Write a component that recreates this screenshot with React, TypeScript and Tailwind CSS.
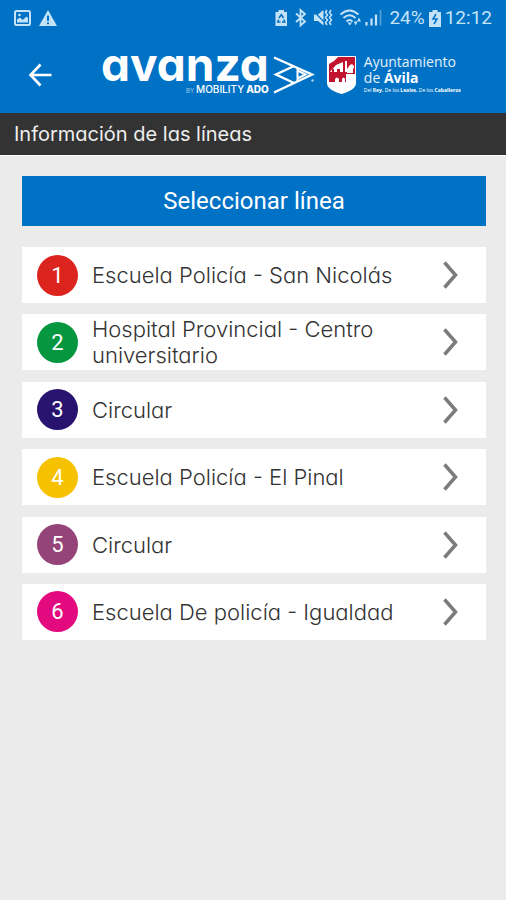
const lines = [
  { id: 1, name: "Escuela Policía - San Nicolás", color: "bg-[#dc241f]" },
  { id: 2, name: "Hospital Provincial - Centro universitario", color: "bg-[#05963f]" },
  { id: 3, name: "Circular", color: "bg-[#28146f]" },
  { id: 4, name: "Escuela Policía - El Pinal", color: "bg-[#f6c200]" },
  { id: 5, name: "Circular", color: "bg-[#954479]" },
  { id: 6, name: "Escuela De policía - Igualdad", color: "bg-[#e20a7e]" },
];

function StatusBar() {
  return (
    <div className="flex h-9 items-center justify-between px-[14px] text-[#c5e3f8]">
      <div className="flex items-center gap-2">
        <svg width="17" height="16" viewBox="0 0 17 16" aria-hidden="true">
          <rect x="1" y="1" width="15" height="14" rx="1.5" fill="none" stroke="currentColor" strokeWidth="2" />
          <path d="M3 12.5V9.5L6 7.5L8.5 10L12.5 6.5L14 8V12.5Z" fill="currentColor" />
          <circle cx="5.5" cy="5" r="1.3" fill="currentColor" />
        </svg>
        <svg width="18" height="16" viewBox="0 0 18 16" aria-hidden="true">
          <path fillRule="evenodd" d="M9 0L18 16H0ZM8 5.5V11H10V5.5ZM8 12.3V14.3H10V12.3Z" fill="currentColor" />
        </svg>
      </div>
      <div className="flex items-center font-[Roboto,sans-serif] text-[19px] leading-6">
        <svg width="108" height="20" viewBox="276 8 108 20" className="mr-[6px]" aria-hidden="true" fill="none" stroke="currentColor">
          <path d="M279.5 10H285V12H288V26H276.5V12H279.5Z" fill="currentColor" stroke="none" />
          <path d="M280 18L282.3 14.5L284.6 18M279.5 19.5L278.8 22H281.5M285 19.5L285.8 22H283" stroke="#0072c6" strokeWidth="1.5" />
          <path d="M297 13.5L306 21.5L301.5 25.5V10L306 14L297 22" strokeWidth="1.8" />
          <path d="M315 14.5H319L324.5 10V25.5L319 21H315Z" fill="currentColor" stroke="none" />
          <path d="M314.5 11L327 24" stroke="#0072c6" strokeWidth="1.2" />
          <path d="M328 10L326.5 12.5L328.5 15L326.5 17.5L328.5 20L326.5 22.5L328 25M332 10L330.5 12.5L332.5 15L330.5 17.5L332.5 20L330.5 22.5L332 25" strokeWidth="1.5" />
          <path d="M341.5 14.5Q350.5 6.5 359.5 14.5M344.5 18Q350.5 12.5 356.5 18M347.5 21.5Q350.5 18.5 353.5 21.5" strokeWidth="1.9" />
          <path d="M348.5 22.5H353L350.8 25.5ZM354.8 21.5H358.5L356.7 25.5ZM358 21.5L360 17.5L362 21.5Z" fill="currentColor" stroke="none" />
          <path d="M367.5 22V25.5M372.5 18.5V25.5M377 14.5V25.5" strokeWidth="2.2" />
          <path d="M381.5 10V25.5" strokeWidth="1.8" opacity="0.4" />
        </svg>
        <span>24%</span>
        <svg width="12" height="17" viewBox="0 0 12 17" className="mr-1 ml-1" aria-hidden="true">
          <path d="M3.5 0H8.5V2H12V17H0V2H3.5Z" fill="currentColor" />
          <path d="M7 4L4 9H8L5 14" fill="none" stroke="#0072c6" strokeWidth="1.5" />
        </svg>
        <span>12:12</span>
      </div>
    </div>
  );
}

function AvanzaLogo() {
  return (
    <div className="flex items-center text-white">
      <div className="flex flex-col items-end pb-1 font-[Inter,sans-serif] [font-feature-settings:'cv11']">
        <span className="text-[46px] leading-[34px] font-bold">avanza</span>
        <span className="flex items-baseline gap-px text-[10px] leading-4">
          <span className="text-[6px] opacity-60">BY</span>
          <span className="ml-px font-medium">MOBILITY</span>
          <span className="ml-px font-extrabold">ADO</span>
        </span>
      </div>
      <svg width="42" height="40" viewBox="272 54 42 40" className="ml-1" fill="none" stroke="currentColor" strokeWidth="2.4" aria-hidden="true">
        <path d="M273 56.5L311 73.5L273 91.5" />
        <path d="M293 65L275 73.5L293 82" />
        <path d="M296.5 67V80M296.5 69.5L304.5 73.5L296.5 77.5" strokeWidth="2" />
        <circle cx="311.5" cy="79.5" r="1.2" fill="currentColor" stroke="none" opacity="0.7" />
      </svg>
    </div>
  );
}

function AvilaLogo() {
  return (
    <div className="flex items-center gap-2 text-white">
      <svg width="29" height="38" viewBox="0 0 29 38" aria-hidden="true">
        <path d="M0 0H29V27Q29 34 14.5 38Q0 34 0 27Z" fill="#fff" />
        <path d="M11 1H28V26H2V8Q7 6 11 1Z" fill="#c2142f" />
        <path d="M3 16L9 9L16 6V16H13V13H10V16H7V13H5V16Z" fill="#fff" />
        <path d="M18 5H20V16H18ZM23 9A2.5 2.5 0 1 1 26 13V17H20V13Z" fill="#fff" />
        <path d="M19 18H28V27H19ZM8 27V23Q10 20 12 23V27ZM15 27V23Q16.500 20 18 23V27Z" fill="#fff" />
      </svg>
      <div className="pb-px font-['Open_Sans',sans-serif] text-[14px] leading-4">
        <div className="text-white/90">Ayuntamiento</div>
        <div>
          <span className="text-white/90">de</span> <b>Ávila</b>
        </div>
        <div className="text-[5px] leading-2">
          Del <b>Rey.</b> De los <b>Leales.</b> De los <b>Caballeros</b>
        </div>
      </div>
    </div>
  );
}

export default function App() {
  return (
    <div className="min-h-screen bg-[#ebebeb] font-[Inter,sans-serif]">
      <header className="bg-[#0072c6]">
        <StatusBar />
        <div className="flex h-[77px] items-center pl-7">
          <button type="button" aria-label="Volver" className="mr-[49px] text-white">
            <svg width="24" height="24" viewBox="0 0 24 24" fill="none" stroke="currentColor" strokeWidth="2.6" aria-hidden="true">
              <path d="M12.5 1.5L2.5 12L12.5 22.5M2.5 12H23.5" />
            </svg>
          </button>
          <AvanzaLogo />
          <div className="ml-3">
            <AvilaLogo />
          </div>
        </div>
      </header>
      <h1 className="border-b border-white bg-[#333] px-[14px] text-[20px] leading-[42px] text-[#eee] [font-feature-settings:'cv11']">
        Información de las líneas
      </h1>
      <main className="pt-5 pr-5 pl-[22px]">
        <button type="button" className="block w-full bg-[#0072c6] font-[Roboto,sans-serif] text-[24px] leading-[50px] text-white">
          Seleccionar línea
        </button>
        <ul className="mt-[21px] flex min-h-[393px] flex-col justify-between">
          {lines.map((line) => (
            <li key={line.id}>
              <button type="button" className="flex h-14 w-full items-center bg-white pr-7 pl-[15px] text-left">
                <span className={`flex size-[41px] shrink-0 items-center justify-center rounded-full font-[Roboto,sans-serif] text-[22px] text-white ${line.color}`}>
                  {line.id}
                </span>
                <span className="ml-[14px] flex-1 pr-8 text-[22px] leading-[26px] font-light text-[#333] [font-feature-settings:'cv11']">
                  {line.name}
                </span>
                <svg width="15" height="28" viewBox="0 0 15 28" fill="none" stroke="#7c7c7c" strokeWidth="3.5" aria-hidden="true">
                  <path d="M1.5 1.5L12.5 14L1.5 26.5" />
                </svg>
              </button>
            </li>
          ))}
        </ul>
      </main>
    </div>
  );
}
